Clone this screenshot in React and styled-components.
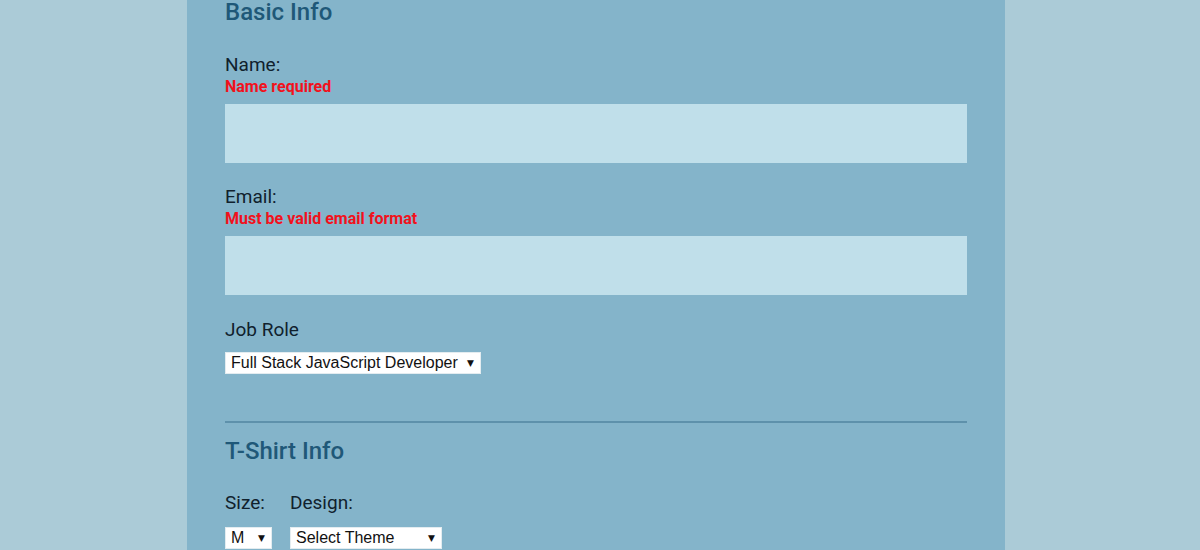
import React from "react";
import styled, { createGlobalStyle } from "styled-components";

const Global = createGlobalStyle`
  html, body { margin: 0; padding: 0; background: #abcbd7; }
  body { font-family: Roboto, "Noto Sans", sans-serif; }
  * { box-sizing: border-box; }
`;

const Page = styled.div`
  width: 1200px;
  height: 550px;
  overflow: hidden;
  background: #abcbd7;
`;

const Panel = styled.form`
  width: 818px;
  margin-left: 187px;
  min-height: 550px;
  background: #84b4ca;
  padding: 0 38px;
  display: flex;
  flex-direction: column;
`;

const Fieldset = styled.fieldset`
  border: none;
  margin: 0;
  padding: 0;
  display: flex;
  flex-direction: column;
`;

const Heading = styled.legend`
  padding: 0;
  margin: ${(p) => p.$top || "0"} 0 0;
  font-size: 24px;
  line-height: 24px;
  font-weight: 500;
  color: #1f5878;
  float: left;
  width: 100%;
`;

const Label = styled.label`
  display: block;
  margin-top: ${(p) => p.$top || "0"};
  font-size: 19px;
  line-height: 22px;
  color: #10212d;
`;

const Error = styled.span`
  display: block;
  margin-top: 1px;
  font-size: 16px;
  line-height: 20px;
  font-weight: 700;
  color: #f2111c;
`;

const Input = styled.input`
  display: block;
  width: 100%;
  height: 59px;
  margin-top: 7px;
  border: none;
  outline: none;
  background: #c0dfea;
  font-size: 18px;
  padding: 0 12px;
`;

const SelectWrap = styled.span`
  position: relative;
  display: inline-block;
  width: ${(p) => p.$w};
  margin-top: ${(p) => p.$top || "0"};
`;

const Select = styled.select`
  appearance: none;
  -webkit-appearance: none;
  display: block;
  width: 100%;
  height: 22px;
  margin: 0;
  border: 1px solid #e3ecf0;
  border-radius: 0;
  background: #fff;
  color: #111;
  font-family: "Liberation Sans", Arial, sans-serif;
  font-size: 16px;
  line-height: 20px;
  padding: 0 20px 0 5px;
  outline: none;
`;

const Arrow = styled.span`
  position: absolute;
  right: 7px;
  top: 4px;
  font-family: "DejaVu Sans", sans-serif;
  font-size: 9px;
  line-height: 14px;
  color: #111;
  pointer-events: none;
`;

const Rule = styled.hr`
  width: 100%;
  height: 2px;
  border: none;
  margin: 47px 0 0;
  background: #5e91ab;
`;

const Row = styled.div`
  display: flex;
  gap: 18px;
  margin-top: 29px;
`;

const Column = styled.div`
  display: flex;
  flex-direction: column;
  align-items: flex-start;
`;

const SmallLabel = styled(Label)`
  margin-bottom: 13px;
`;

function Dropdown({ width, top, value, options }) {
  return (
    <SelectWrap $w={width} $top={top}>
      <Select defaultValue={value}>
        {options.map((o) => (
          <option key={o}>{o}</option>
        ))}
      </Select>
      <Arrow>▼</Arrow>
    </SelectWrap>
  );
}

export default function App() {
  return (
    <Page>
      <Global />
      <Panel>
        <Fieldset>
          <Heading>Basic Info</Heading>
          <Label $top="30px" htmlFor="name">Name:</Label>
          <Error>Name required</Error>
          <Input id="name" type="text" />
          <Label $top="23px" htmlFor="mail">Email:</Label>
          <Error>Must be valid email format</Error>
          <Input id="mail" type="email" />
          <Label $top="24px" htmlFor="title">Job Role</Label>
          <Dropdown
            width="256px"
            top="11px"
            value="Full Stack JavaScript Developer"
            options={["Full Stack JavaScript Developer", "Front End Developer", "Back End Developer", "Other"]}
          />
        </Fieldset>
        <Rule />
        <Fieldset>
          <Heading $top="16px">T-Shirt Info</Heading>
          <Row>
            <Column>
              <SmallLabel htmlFor="size">Size:</SmallLabel>
              <Dropdown width="47px" value="M" options={["S", "M", "L", "XL"]} />
            </Column>
            <Column>
              <SmallLabel htmlFor="design">Design:</SmallLabel>
              <Dropdown width="152px" value="Select Theme" options={["Select Theme", "Theme - JS Puns", "Theme - I ♥ JS"]} />
            </Column>
          </Row>
        </Fieldset>
      </Panel>
    </Page>
  );
}
